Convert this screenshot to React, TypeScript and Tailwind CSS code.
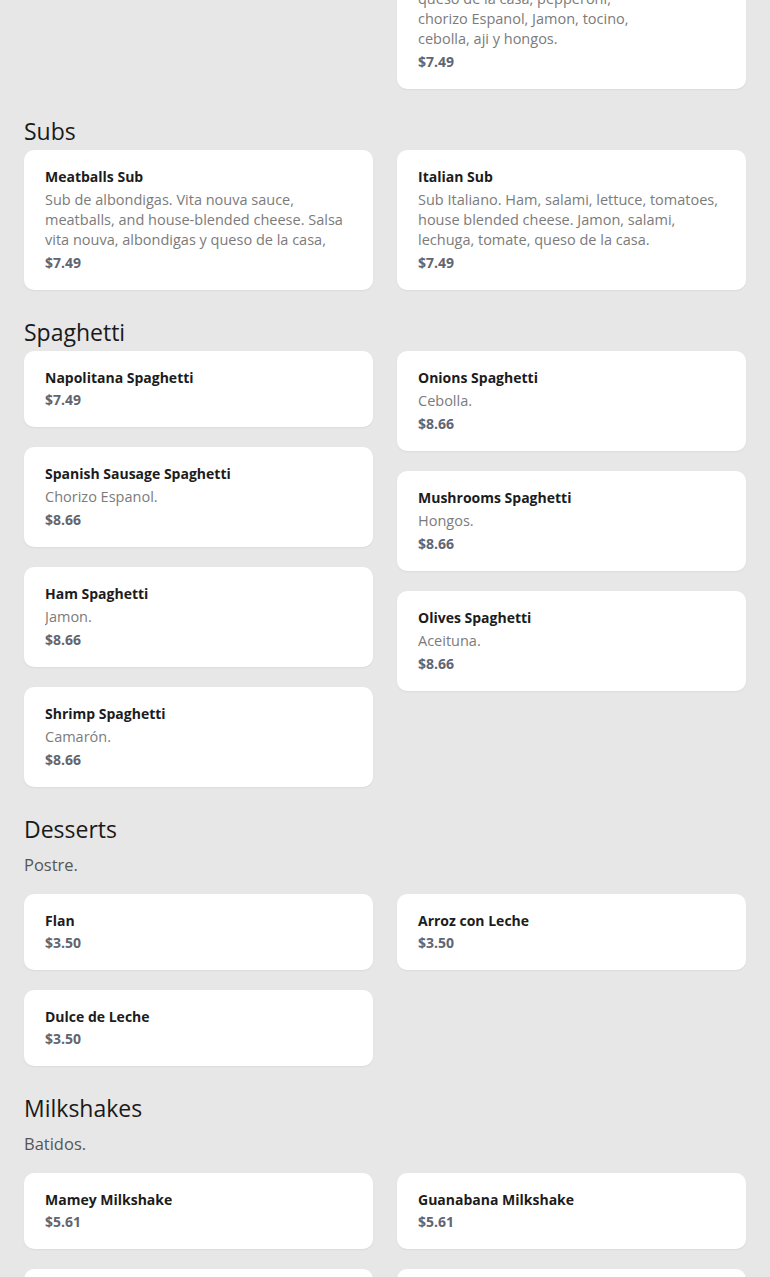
import React from 'react';

type Item = { name: string; desc?: React.ReactNode; price: string };
type Section = { title: string; note?: string; items: Item[] };

const sections: Section[] = [
  {
    title: 'Pizza',
    items: [
      { name: 'Cheese Pizza', price: '$6.49' },
      {
        name: 'Pepperoni Pizza',
        desc: 'Vita nouva sauce, house-blended cheese and pepperoni. Salsa, queso y pepperoni.',
        price: '$6.99',
      },
      { name: 'Hawaiian Pizza', price: '$6.99' },
      {
        name: 'Vita Nouva Special Pizza',
        desc: (
          <>
            queso de la casa, pepperoni,
            <br />
            chorizo Espanol, Jamon, tocino,
            <br />
            cebolla, aji y hongos.
          </>
        ),
        price: '$7.49',
      },
    ],
  },
  {
    title: 'Subs',
    items: [
      {
        name: 'Meatballs Sub',
        desc: 'Sub de albondigas. Vita nouva sauce, meatballs, and house-blended cheese. Salsa vita nouva, albondigas y queso de la casa, horneado.',
        price: '$7.49',
      },
      {
        name: 'Italian Sub',
        desc: 'Sub Italiano. Ham, salami, lettuce, tomatoes, house blended cheese. Jamon, salami, lechuga, tomate, queso de la casa.',
        price: '$7.49',
      },
    ],
  },
  {
    title: 'Spaghetti',
    items: [
      { name: 'Napolitana Spaghetti', price: '$7.49' },
      { name: 'Onions Spaghetti', desc: 'Cebolla.', price: '$8.66' },
      { name: 'Spanish Sausage Spaghetti', desc: 'Chorizo Espanol.', price: '$8.66' },
      { name: 'Mushrooms Spaghetti', desc: 'Hongos.', price: '$8.66' },
      { name: 'Ham Spaghetti', desc: 'Jamon.', price: '$8.66' },
      { name: 'Olives Spaghetti', desc: 'Aceituna.', price: '$8.66' },
      { name: 'Shrimp Spaghetti', desc: 'Camarón.', price: '$8.66' },
    ],
  },
  {
    title: 'Desserts',
    note: 'Postre.',
    items: [
      { name: 'Flan', price: '$3.50' },
      { name: 'Arroz con Leche', price: '$3.50' },
      { name: 'Dulce de Leche', price: '$3.50' },
    ],
  },
  {
    title: 'Milkshakes',
    note: 'Batidos.',
    items: [
      { name: 'Mamey Milkshake', price: '$5.61' },
      { name: 'Guanabana Milkshake', price: '$5.61' },
      { name: 'Mango Milkshake', price: '$5.61' },
      { name: 'Papaya Milkshake', price: '$5.61' },
    ],
  },
];

function MenuCard({ item }: { item: Item }) {
  return (
    <div className="bg-white rounded-[10px] shadow-[0_1px_2px_rgba(0,0,0,0.06)] px-[21px] pt-[17px] pb-[17px]">
      <h3 className="text-[14px] leading-5 font-bold text-[#1c1c1c]">{item.name}</h3>
      {item.desc && (
        <p className="mt-[3px] text-[14.5px] leading-5 text-[#7b7b7b] max-h-[60px] overflow-hidden">{item.desc}</p>
      )}
      <p className={`${item.desc ? 'mt-[3px]' : 'mt-[2px]'} text-[14px] leading-5 font-bold text-[#5f6672]`}>
        {item.price}
      </p>
    </div>
  );
}

function MenuSection({ section }: { section: Section }) {
  const left = section.items.filter((_, i) => i % 2 === 0);
  const right = section.items.filter((_, i) => i % 2 === 1);
  return (
    <section>
      <h2 className={`text-[23px] leading-7 text-[#1a1a1a] ${section.note ? 'mb-[10px]' : 'mb-[5px]'}`}>
        {section.title}
      </h2>
      {section.note && <p className="text-[16.5px] leading-6 text-[#555] mb-[17px]">{section.note}</p>}
      <div className="grid grid-cols-2 gap-x-6 items-start">
        <div className="flex flex-col gap-5">
          {left.map((it) => (
            <MenuCard key={it.name} item={it} />
          ))}
        </div>
        <div className="flex flex-col gap-5">
          {right.map((it) => (
            <MenuCard key={it.name} item={it} />
          ))}
        </div>
      </div>
    </section>
  );
}

export default function App() {
  return (
    <main
      className="min-h-screen bg-[#e7e7e7] px-6 pb-10 overflow-hidden"
      style={{ fontFamily: '"Open Sans", "Liberation Sans", sans-serif' }}
    >
      <div className="-mt-[224px] flex flex-col gap-7">
        {sections.map((s) => (
          <MenuSection key={s.title} section={s} />
        ))}
      </div>
    </main>
  );
}
